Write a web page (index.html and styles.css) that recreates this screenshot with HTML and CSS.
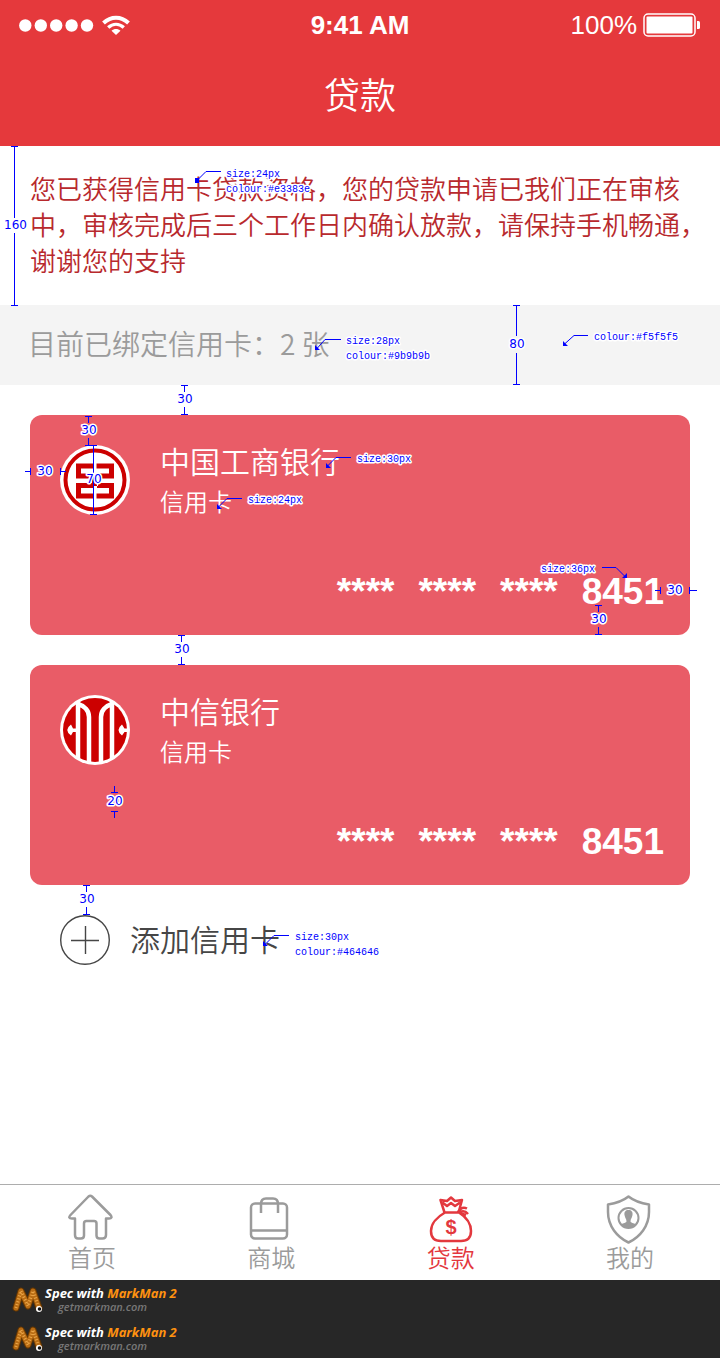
FILE: index.html
```html
<!DOCTYPE html>
<html lang="zh-CN">
<head>
<meta charset="utf-8">
<meta name="viewport" content="width=device-width, initial-scale=1">
<title>贷款</title>
<link rel="stylesheet" href="styles.css">
</head>
<body>
<div class="page">
  <header class="header">
    <div class="status">
      <div class="status-left">
        <svg class="signal" viewBox="0 0 75 13" aria-hidden="true"><circle cx="6.3" cy="6.5" r="6.2"/><circle cx="21.8" cy="6.5" r="6.2"/><circle cx="37.2" cy="6.5" r="6.2"/><circle cx="52.6" cy="6.5" r="6.2"/><circle cx="68" cy="6.5" r="6.2"/></svg>
        <svg class="wifi" viewBox="0 0 28 21" aria-hidden="true"><path d="M1.500 8C9 1 19 1 26.500 8" fill="none" stroke="#fff" stroke-width="4"/><path d="M6.200 12.500C11 8.300 17 8.300 21.800 12.500" fill="none" stroke="#fff" stroke-width="3.400"/><path d="M9.500 15.800C12 13.500 16 13.500 18.500 15.800L14 20Z"/></svg>
      </div>
      <time class="clock">9:41 AM</time>
      <div class="status-right">
        <span class="charge">100%</span>
        <svg class="battery" viewBox="0 0 58 24" aria-hidden="true"><rect x="1" y="1" width="51" height="22" rx="4" fill="none" stroke="#fff" stroke-width="1.500"/><rect x="3.500" y="3.500" width="46" height="17" rx="1"/><path d="M54 8h1.500q1.500 0 1.500 1.500v5q0 1.500-1.500 1.500H54z"/></svg>
      </div>
    </div>
    <h1 class="title">贷款</h1>
  </header>

  <main class="main">
    <p class="notice">您已获得信用卡贷款资格，您的贷款申请已我们正在审核中，审核完成后三个工作日内确认放款，请保持手机畅通，谢谢您的支持</p>
    <h2 class="summary">目前已绑定信用卡：2 张</h2>
    <section class="cards">
      <article class="card">
        <div class="card-head">
          <svg class="bank-logo" viewBox="0 0 70 70" aria-hidden="true">
            <circle cx="35" cy="35" r="35" fill="#fff"/><circle cx="35" cy="35" r="29.500" fill="none" stroke="#c00" stroke-width="4"/>
            <path fill="#c00" d="M16 18.500H33.500V23.500H21V28.500H33V43H21V48.500H33.500V53.500H16V38H32V33.500H16ZM54 18.500H36.500V23.500H49V28.500H37V43H49V48.500H36.500V53.500H54V38H38V33.500H54ZM32 31h6v10h-6z"/>
          </svg>
          <div><h3 class="bank">中国工商银行</h3><p class="kind">信用卡</p></div>
        </div>
        <p class="number"><span>****</span><span>****</span><span>****</span><span>8451</span></p>
      </article>
      <article class="card">
        <div class="card-head">
          <svg class="bank-logo" viewBox="0 0 70 70" aria-hidden="true">
            <defs><clipPath id="disc"><circle cx="35" cy="35" r="33"/></clipPath></defs>
            <circle cx="35" cy="35" r="35" fill="#fff"/><circle cx="35" cy="35" r="32" fill="#c00"/>
            <g clip-path="url(#disc)"><path d="M18 5V66M52 5V66M18 9C25 11 29 16 29 22V70M52 9C45 11 41 16 41 22V70" fill="none" stroke="#fff" stroke-width="4.500"/>
            <path fill="#fff" d="M16 33.500H13L11 29.500Q3.500 35 11 40.500L13 37H16ZM67 33.500H64.500L62 29.500Q55 35 62 40.500L64.500 37H67Z"/></g>
          </svg>
          <div><h3 class="bank">中信银行</h3><p class="kind">信用卡</p></div>
        </div>
        <p class="number"><span>****</span><span>****</span><span>****</span><span>8451</span></p>
      </article>
    </section>
    <button class="add" type="button">
      <svg class="add-icon" viewBox="0 0 50 50" aria-hidden="true"><circle cx="25" cy="25" r="24.300"/><path d="M11 25.500H39M25.500 11V39"/></svg>
      <span class="add-label">添加信用卡</span>
    </button>
  </main>

  <nav class="tabs">
    <a class="tab" href="#home">
      <svg class="tab-icon" viewBox="0 0 48 50" aria-hidden="true"><path d="M20.500 2.500Q22.300 1 24 2.500L42.500 21Q45 24.500 41 24.500H38V41Q38 44.500 34.500 44.500H31.500Q28.500 44.500 28.500 41.500V29.500Q28.500 27 26 27H18.500Q16 27 16 29.500V41.500Q16 44.500 13 44.500H10Q7 44.500 7 41V24.500H4Q-.500 24.500 2.500 21Z"/></svg>
      <span>首页</span>
    </a>
    <a class="tab" href="#mall">
      <svg class="tab-icon" viewBox="0 0 48 50" aria-hidden="true"><rect x="4" y="9.500" width="36" height="35" rx="4"/><path d="M4 36.500H40M14 19V10Q14 4.500 19 4.500H26Q31 4.500 31 10V19"/></svg>
      <span>商城</span>
    </a>
    <a class="tab tab-active" href="#loan" aria-current="page">
      <svg class="tab-icon" viewBox="0 0 48 50" aria-hidden="true"><path d="M17.500 18.500L13.500 6L20 7L24 3.500L28 7L35 6L31.500 18.500ZM15.500 8.500L20 12L24 9L28 12L33 8.500M18 18.500C10 23 4 30 4 37Q4 47 14 47H34Q44 47 44 37C44 30 39 23 32 18.500M31 18C34 13 37 13 40 14.500M33 18C36 16.500 39 17.500 41 20M34 19.500L39 21"/><text class="dollar" x="24" y="40">$</text></svg>
      <span>贷款</span>
    </a>
    <a class="tab" href="#me">
      <svg class="tab-icon" viewBox="0 0 48 50" aria-hidden="true"><path d="M22.500 2.500Q30 8.500 43 10.500V18C43 32 34 43 22.500 48.500C11 43 2 32 2 18V10.500Q15 8.500 22.500 2.500Z"/><circle cx="22.500" cy="24" r="10" stroke-width="2"/><path class="solid" d="M22.500 16C19.500 16 18 18 18.500 21C19 24 20.500 25 20.500 27.500C19.500 29.500 16 29 15 30.500Q18 34 22.500 34T30 30.500C29 29 25.500 29.500 24.500 27.500C24.500 25 26 24 26.500 21C27 18 25.500 16 22.500 16Z"/></svg>
      <span>我的</span>
    </a>
  </nav>

  <footer class="credits">
    <a class="credit" href="#markman">
      <svg class="worm" viewBox="0 0 32 28" aria-hidden="true"><path class="worm-edge" d="M4 22L9 5L16 20L21 5L27 22"/><path class="worm-body" d="M4 22L9 5L16 20L21 5L27 22"/><path class="worm-rings" d="M4 22L9 5L16 20L21 5L27 22"/><circle cx="27" cy="23" r="3" fill="#fff"/><circle cx="27.500" cy="23" r="1.800" fill="#111"/></svg>
      <span class="credit-text"><strong class="credit-name">Spec with <span class="brand">MarkMan 2</span></strong><span class="site">getmarkman.com</span></span>
    </a>
    <a class="credit" href="#markman">
      <svg class="worm" viewBox="0 0 32 28" aria-hidden="true"><path class="worm-edge" d="M4 22L9 5L16 20L21 5L27 22"/><path class="worm-body" d="M4 22L9 5L16 20L21 5L27 22"/><path class="worm-rings" d="M4 22L9 5L16 20L21 5L27 22"/><circle cx="27" cy="23" r="3" fill="#fff"/><circle cx="27.500" cy="23" r="1.800" fill="#111"/></svg>
      <span class="credit-text"><strong class="credit-name">Spec with <span class="brand">MarkMan 2</span></strong><span class="site">getmarkman.com</span></span>
    </a>
  </footer>

  <!-- Design measurements drawn over the screen -->
  <svg class="spec" viewBox="0 0 720 980" width="720" height="980">
    <path class="rule" d="M11 146.500h7M14.500 146v72M14.500 233v72M11 305.500h7
      M181 385.500h7M184.500 385v7M184.500 407v7M181 414.500h7
      M513 305.500h7M516.500 305v31M516.500 353v31M513 384.500h7
      M85 416.500h7M88.500 416v7M88.500 438v7M85 445.500h7
      M25 471.500h6M30.500 468v7M60.500 468v7M60 471.500h6
      M90 445.500h7M93.500 445v69M90 514.500h7
      M655 590.500h6M660.500 587v7M689.500 587v7M690 590.500h7
      M595 605.500h7M598.500 605v7M598.500 627v7M595 634.500h7
      M178 635.500h7M181.500 635v7M181.500 657v7M178 664.500h7
      M111 792.500h7M114.500 786v6M114.500 811v7M111 811.500h7
      M83 885.500h7M86.500 885v7M86.500 907v7M83 914.500h7"/>
    <path class="lead" d="M197 180.500l9-9h15M317 348.500l8-9h16M564 344.500l10-9h14M327 466.500l9-9h15M218 507.500l9-9h15M602 567.500h14l9 9M265 944.500l9-9h15"/>
    <path class="tip" d="M195 178h4v5h-4zM315 345l5 5h-5zM563 341l5 5h-5zM326 463l5 5h-5zM217 504l5 5h-5zM627 573v5h-5zM263 941l5 5h-5z"/>
    <g class="measure"><text x="15.500" y="229">160</text><text x="185" y="403">30</text><text x="517" y="348">80</text><text x="89" y="434">30</text><text x="45" y="475">30</text><text x="94" y="483">70</text><text x="675" y="594">30</text><text x="599" y="623">30</text><text x="182" y="653">30</text><text x="115" y="805">20</text><text x="87" y="903">30</text></g>
    <g class="label"><text x="226" y="177">size:24px</text><text x="226" y="192">colour:#e3383e</text><text x="346" y="344">size:28px</text><text x="346" y="359">colour:#9b9b9b</text><text x="594" y="340">colour:#f5f5f5</text><text x="357" y="462">size:30px</text><text x="248" y="503">size:24px</text><text x="541" y="572">size:36px</text><text x="295" y="940">size:30px</text><text x="295" y="955">colour:#464646</text></g>
  </svg>
</div>
</body>
</html>
```

FILE: styles.css
```css
* { box-sizing: border-box; }
body, h1, h2, h3, p { margin: 0; font-weight: 350; }
body {
  background: #fff;
  font-family: "Noto Sans CJK SC", sans-serif;
}
.page {
  position: relative;
  display: flex;
  flex-direction: column;
  min-height: 100vh;
}
.header {
  background: #e5393c;
  color: #fff;
  padding-bottom: 31px;
}
.status {
  display: grid;
  grid-template-columns: 1fr auto 1fr;
  align-items: center;
  height: 50px;
  padding: 0 19px;
  font-family: "Liberation Sans", Arial, sans-serif;
  font-size: 26px;
  fill: #fff;
}
.status-left, .status-right {
  display: flex;
  align-items: center;
  gap: 8px;
}
.status-right { justify-content: flex-end; gap: 6px; }
.signal { width: 75px; height: 13px; }
.wifi { width: 28px; height: 21px; }
.battery { width: 58px; height: 24px; }
.clock { font-weight: 700; }
.title {
  font-size: 36px;
  line-height: 44px;
  text-align: center;
  padding-top: 21px;
}
.notice {
  min-height: 159px;
  padding: 24px 14px 27px 30px;
  color: #b8292d;
  font-size: 26px;
  line-height: 36px;
}
.main { flex: 1; }
.summary {
  padding: 18px 28px 22px;
  background: #f4f4f4;
  color: #9b9b9b;
  font-size: 28px;
  line-height: 40px;
}
.cards {
  display: flex;
  flex-direction: column;
  gap: 30px;
  padding: 30px;
}
.card {
  display: flex;
  flex-direction: column;
  justify-content: space-between;
  min-height: 220px;
  padding: 30px 26px 22px 30px;
  border-radius: 12px;
  background: #e95c67;
  color: #fff;
}
.card-head { display: flex; gap: 30px; }
.bank-logo { width: 70px; height: 70px; }
.bank { font-size: 30px; line-height: 30px; }
.kind { font-size: 24px; line-height: 28px; padding-top: 12px; }
.number {
  display: flex;
  justify-content: flex-end;
  gap: 24px;
  font-family: "Liberation Sans", Arial, sans-serif;
  font-size: 37px;
  font-weight: 700;
  line-height: 42px;
}
.add {
  display: flex;
  align-items: center;
  gap: 20px;
  margin-left: 60px;
  padding: 0;
  border: 0;
  background: none;
  color: #464646;
  font: 350 30px/46px "Noto Sans CJK SC", sans-serif;
}
.add-label { padding-bottom: 4px; }
.add-icon {
  width: 50px;
  height: 50px;
  fill: none;
  stroke: #464646;
  stroke-width: 1.4;
}
.tabs {
  display: flex;
  justify-content: space-between;
  padding: 9px 66px 10px 68px;
  border-top: 1px solid #adadad;
}
.tab {
  display: flex;
  flex-direction: column;
  color: #9b9b9b;
  font-size: 24px;
  font-weight: 350;
  line-height: 26px;
  text-decoration: none;
}
.tab-active { color: #e3383e; }
.tab-icon {
  width: 48px;
  height: 50px;
  fill: none;
  stroke: currentColor;
  stroke-width: 2.5;
  stroke-linejoin: round;
}
.tab-icon .solid { fill: currentColor; stroke: none; }
.dollar {
  fill: currentColor;
  stroke: none;
  font: 700 20px "Liberation Sans", Arial, sans-serif;
  text-anchor: middle;
}
.credits { background: #272727; }
.credit {
  display: flex;
  gap: 1px;
  height: 39px;
  padding: 6px 12px 5px;
  text-decoration: none;
  font-family: "Open Sans", sans-serif;
  font-style: italic;
  font-weight: 600;
}
.worm { width: 32px; height: 28px; fill: none; stroke-linejoin: round; stroke-linecap: round; }
.worm-edge { stroke: #653600; stroke-width: 7; }
.worm-body { stroke: #b86c14; stroke-width: 5; }
.worm-rings { stroke: #eba648; stroke-width: 3; stroke-dasharray: 1 2; stroke-linecap: butt; }
.credit-text { display: flex; flex-direction: column; }
.credit-name { color: #fff; font-size: 13px; font-weight: 700; line-height: 15px; }
.brand { color: #ff9210; }
.site { color: #777; font-size: 11px; line-height: 12px; padding-left: 13px; }
.spec {
  position: absolute;
  top: 0;
  left: 0;
  pointer-events: none;
}
.rule { stroke: #00f; fill: none; shape-rendering: crispEdges; }
.lead { stroke: #00f; fill: none; }
.tip { fill: #00f; }
.spec text {
  fill: #00f;
  stroke: #fff;
  stroke-width: 3px;
  stroke-linejoin: round;
  paint-order: stroke;
}
.measure { font: 12px "DejaVu Sans", Verdana, sans-serif; text-anchor: middle; }
.label { font: 10px "Liberation Mono", monospace; }
```
